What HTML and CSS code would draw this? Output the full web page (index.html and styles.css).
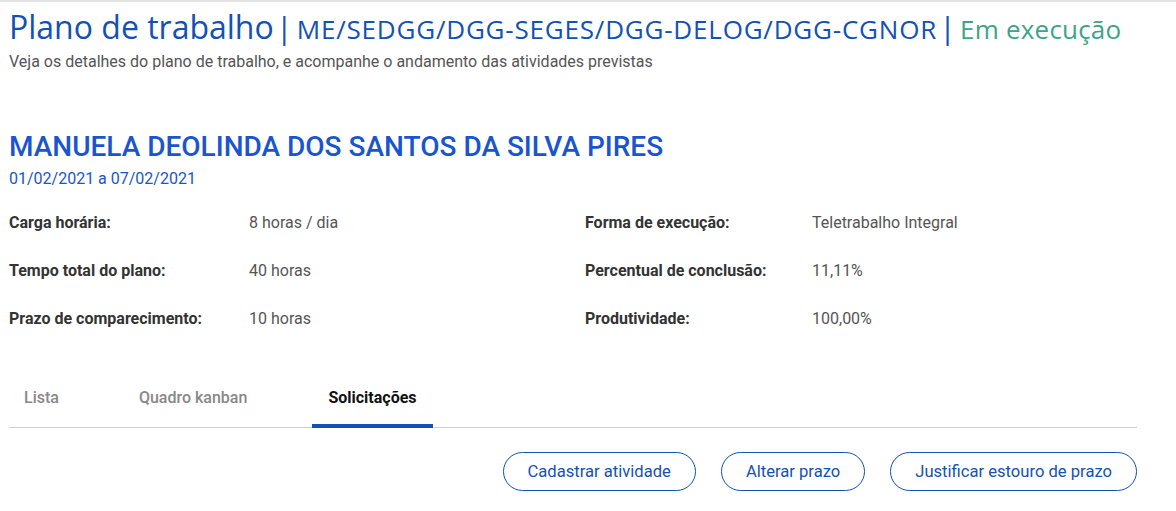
FILE: index.html
```html
<!DOCTYPE html>
<html lang="pt-BR">
<head>
<meta charset="utf-8">
<title>Plano de trabalho</title>
<link rel="stylesheet" href="styles.css">
</head>
<body>
<div class="topline"></div>
<main class="page">
  <header class="head">
    <h1 class="title"><span class="t-main">Plano de trabalho</span><span class="sep">|</span><span class="t-unit">ME/SEDGG/DGG-SEGES/DGG-DELOG/DGG-CGNOR</span><span class="sep">|</span><span class="t-status">Em execução</span></h1>
    <p class="subtitle">Veja os detalhes do plano de trabalho, e acompanhe o andamento das atividades previstas</p>
  </header>

  <section class="person">
    <h2 class="name">MANUELA DEOLINDA DOS SANTOS DA SILVA PIRES</h2>
    <p class="period">01/02/2021 a 07/02/2021</p>
  </section>

  <section class="details">
    <div class="col">
      <div class="row"><span class="lbl">Carga horária:</span><span class="val">8 horas / dia</span></div>
      <div class="row"><span class="lbl">Tempo total do plano:</span><span class="val">40 horas</span></div>
      <div class="row"><span class="lbl">Prazo de comparecimento:</span><span class="val">10 horas</span></div>
    </div>
    <div class="col">
      <div class="row"><span class="lbl lbl2">Forma de execução:</span><span class="val">Teletrabalho Integral</span></div>
      <div class="row"><span class="lbl lbl2">Percentual de conclusão:</span><span class="val">11,11%</span></div>
      <div class="row"><span class="lbl lbl2">Produtividade:</span><span class="val">100,00%</span></div>
    </div>
  </section>

  <nav class="tabs">
    <span class="tab">Lista</span>
    <span class="tab">Quadro kanban</span>
    <span class="tab active">Solicitações</span>
  </nav>

  <div class="actions">
    <button class="btn">Cadastrar atividade</button>
    <button class="btn">Alterar prazo</button>
    <button class="btn">Justificar estouro de prazo</button>
  </div>
</main>
</body>
</html>
```
FILE: styles.css
```css
* { box-sizing: border-box; }
body {
  margin: 0;
  background: #fff;
  font-family: Roboto, "Liberation Sans", sans-serif;
  color: #333;
}
.topline { height: 2px; background: #e3e3e3; }
.page { width: 1137px; padding-left: 9px; }
.head { padding-top: 7px; }
.title {
  margin: 0;
  font-family: "Open Sans", Lato, sans-serif;
  font-weight: 400;
  line-height: 36px;
  height: 36px;
  white-space: nowrap;
  display: flex;
  align-items: baseline;
}
.t-main { font-size: 32px; color: #1351b4; }
.t-unit { font-size: 26px; letter-spacing: 0.8px; color: #1351b4; }
.t-status { font-size: 26px; letter-spacing: 0.2px; color: #3ea488; }
.sep { font-size: 31px; color: #1351b4; margin: 0 4px 0 2px; }
.subtitle {
  margin: 7px 0 0;
  font-size: 16px;
  color: #555;
  line-height: 20px;
}
.person { margin-top: 59px; }
.name {
  margin: 0;
  font-size: 28px;
  font-weight: 500;
  color: #1a55cf;
  line-height: 32px;
}
.period {
  margin: 6px 0 0;
  font-size: 16px;
  color: #1a55cf;
  line-height: 20px;
}
.details {
  display: flex;
  margin-top: 24px;
}
.col { flex: none; display: flex; flex-direction: column; gap: 28px; }
.col:first-child { width: 576px; }
.row { display: flex; font-size: 16px; line-height: 20px; }
.lbl { width: 240px; font-weight: 700; color: #333; }
.lbl2 { width: 227px; }
.val { color: #555; }
.tabs {
  margin-top: 49px;
  display: flex;
  gap: 50px;
  border-bottom: 1px solid #cfcfcf;
  width: 1128px;
}
.tab {
  padding: 10px 15px 16px;
  font-size: 16px;
  font-weight: 500;
  color: #888;
  line-height: 20px;
  border-bottom: 4px solid transparent;
  margin-bottom: -1px;
}
.tab.active {
  color: #111;
  font-weight: 700;
  border-bottom-color: #1351b4;
  padding-left: 16px;
  padding-right: 16px;
}
.actions {
  display: flex;
  justify-content: flex-end;
  gap: 25px;
  width: 1128px;
  margin-top: 24px;
}
.btn {
  height: 39px;
  padding: 0 24px;
  border: 1px solid #1351b4;
  border-radius: 20px;
  background: #fff;
  color: #1351b4;
  font-family: Roboto, "Liberation Sans", sans-serif;
  font-size: 16.6px;
  font-weight: 400;
}
```
